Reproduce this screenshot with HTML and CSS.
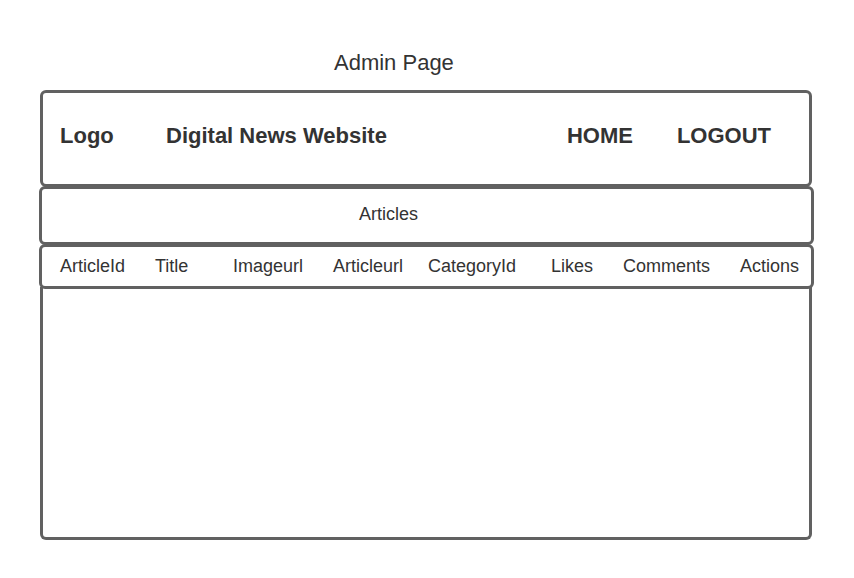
FILE: index.html
```html
<!DOCTYPE html>
<html lang="en">
<head>
<meta charset="utf-8">
<title>Admin Page</title>
<link rel="stylesheet" href="styles.css">
</head>
<body>
<div class="page">
  <div class="page-title">Admin Page</div>
  <header class="topbar">
    <span class="logo">Logo</span>
    <span class="site-name">Digital News Website</span>
    <nav class="nav">
      <span class="nav-item">HOME</span>
      <span class="nav-item">LOGOUT</span>
    </nav>
  </header>
  <div class="section-bar">Articles</div>
  <div class="col-head">
    <span>ArticleId</span>
    <span>Title</span>
    <span>Imageurl</span>
    <span>Articleurl</span>
    <span>CategoryId</span>
    <span>Likes</span>
    <span>Comments</span>
    <span>Actions</span>
  </div>
  <div class="table-body"></div>
</div>
</body>
</html>
```
FILE: styles.css
```css
* { box-sizing: border-box; }
html, body { margin: 0; padding: 0; background: #ffffff; }
body {
  font-family: "Liberation Sans", Arial, sans-serif;
  color: #333333;
  width: 854px;
  height: 578px;
}
.page { display: flex; flex-direction: column; }
.page-title {
  font-size: 22px;
  line-height: 26px;
  padding-top: 50px;
  padding-left: 334px;
  height: 90px;
}
.topbar {
  margin-left: 40px;
  width: 772px;
  height: 97px;
  border: 3px solid #616161;
  border-radius: 6px;
  display: flex;
  align-items: center;
  padding: 0 0 5px 17px;
  font-size: 22px;
  font-weight: bold;
}
.logo { width: 106px; }
.site-name { flex: 1; }
.nav { display: flex; gap: 44px; padding-right: 38px; }
.section-bar {
  margin-left: 39px;
  width: 775px;
  height: 59px;
  margin-top: -1px;
  border: 3px solid #616161;
  border-radius: 6px;
  font-size: 18px;
  display: flex;
  align-items: center;
  padding: 0 0 3px 317px;
}
.col-head {
  margin-left: 39px;
  width: 775px;
  height: 45px;
  margin-top: -1px;
  border: 3px solid #616161;
  border-radius: 6px;
  font-size: 18px;
  display: grid;
  grid-template-columns: 95px 78px 100px 95px 123px 72px 117px 1fr;
  align-items: center;
  padding: 0 0 1px 18px;
}
.table-body {
  margin-left: 40px;
  width: 772px;
  height: 253px;
  margin-top: -2px;
  border: 3px solid #616161;
  border-top: none;
  border-radius: 0 0 6px 6px;
}
```
